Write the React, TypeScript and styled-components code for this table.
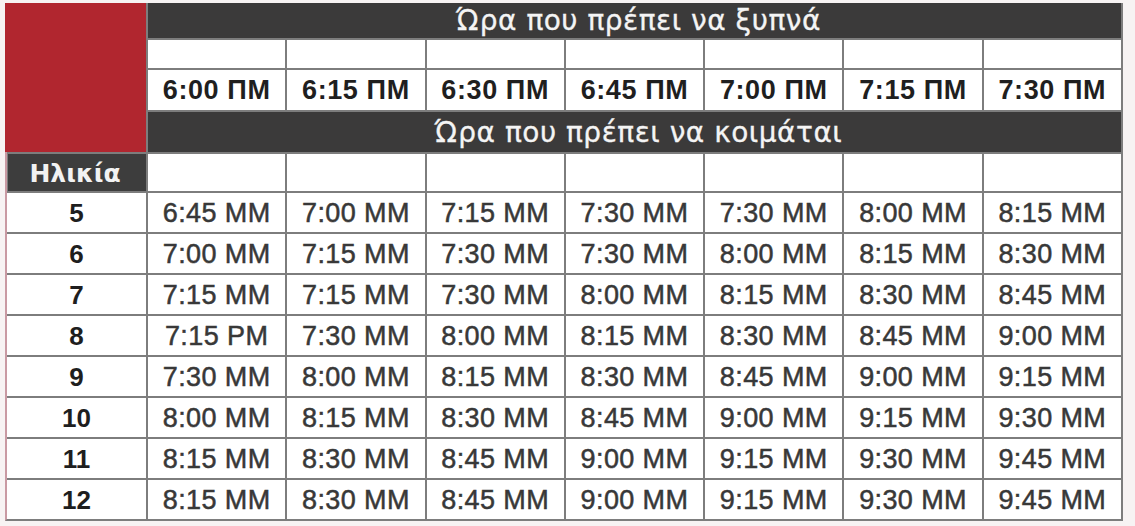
import React from "react";
import styled, { createGlobalStyle } from "styled-components";

const Global = createGlobalStyle`
  html, body { margin: 0; padding: 0; background: #f7f3f3; }
  body { font-family: "Liberation Sans", Arial, sans-serif; }
`;

const Page = styled.div`
  padding: 3px 0 0 5px;
`;

const Table = styled.div`
  width: 1118px;
  box-sizing: border-box;
  display: grid;
  grid-template-columns: 139px repeat(7, 1fr);
  grid-template-rows: 35px 28px 40px 40px 37px repeat(8, 39px);
  gap: 2px;
  background: #7d7d7d;
  border-left: 2px solid #c99aa3;
  border-right: 2px solid #7d7d7d;
  border-bottom: 2px solid #7d7d7d;
`;

const Corner = styled.div`
  grid-column: 1;
  grid-row: 1 / span 4;
  background: #b1262f;
  margin-left: -2px;
`;

const Bar = styled.div<{ $row: number }>`
  grid-column: 2 / span 7;
  grid-row: ${(p) => p.$row};
  background: #3b3a3a;
  color: #f4f4f4;
  display: flex;
  align-items: center;
  justify-content: center;
  font-family: "DejaVu Sans", "Noto Sans", sans-serif;
  font-size: 28px;
  letter-spacing: 0.5px;
  -webkit-text-stroke: 0.3px #f4f4f4;
  padding-left: 8px;
`;

const AgeHead = styled.div`
  grid-column: 1;
  grid-row: 5;
  background: #3d3d3d;
  color: #f2f2f2;
  display: flex;
  align-items: center;
  justify-content: center;
  font-family: "DejaVu Sans", "Noto Sans", sans-serif;
  font-weight: bold;
  font-size: 25px;
  margin-left: 1px;
  padding-top: 2px;
  padding-right: 4px;
`;

const Blank = styled.div`
  background: #ffffff;
`;

const TimeHead = styled.div`
  background: #ffffff;
  display: flex;
  align-items: center;
  justify-content: center;
  font-weight: bold;
  font-size: 27px;
  letter-spacing: 0.6px;
  color: #1f1f1f;
`;

const Age = styled.div`
  background: #ffffff;
  display: flex;
  align-items: center;
  justify-content: center;
  font-weight: bold;
  font-size: 26px;
  color: #1e1e1e;
  padding-top: 2px;
`;

const Cell = styled.div`
  background: #ffffff;
  display: flex;
  align-items: center;
  justify-content: center;
  font-size: 27px;
  color: #383838;
  letter-spacing: 0.4px;
  -webkit-text-stroke: 0.5px #383838;
  padding-top: 2px;
`;

const wake = ["6:00 ΠΜ", "6:15 ΠΜ", "6:30 ΠΜ", "6:45 ΠΜ", "7:00 ΠΜ", "7:15 ΠΜ", "7:30 ΠΜ"];

const rows: [string, string[]][] = [
  ["5", ["6:45 MM", "7:00 MM", "7:15 MM", "7:30 MM", "7:30 MM", "8:00 MM", "8:15 MM"]],
  ["6", ["7:00 MM", "7:15 MM", "7:30 MM", "7:30 MM", "8:00 MM", "8:15 MM", "8:30 MM"]],
  ["7", ["7:15 MM", "7:15 MM", "7:30 MM", "8:00 MM", "8:15 MM", "8:30 MM", "8:45 MM"]],
  ["8", ["7:15 PM", "7:30 MM", "8:00 MM", "8:15 MM", "8:30 MM", "8:45 MM", "9:00 MM"]],
  ["9", ["7:30 MM", "8:00 MM", "8:15 MM", "8:30 MM", "8:45 MM", "9:00 MM", "9:15 MM"]],
  ["10", ["8:00 MM", "8:15 MM", "8:30 MM", "8:45 MM", "9:00 MM", "9:15 MM", "9:30 MM"]],
  ["11", ["8:15 MM", "8:30 MM", "8:45 MM", "9:00 MM", "9:15 MM", "9:30 MM", "9:45 MM"]],
  ["12", ["8:15 MM", "8:30 MM", "8:45 MM", "9:00 MM", "9:15 MM", "9:30 MM", "9:45 MM"]],
];

export default function App() {
  return (
    <>
      <Global />
      <Page>
        <Table>
          <Corner />
          <Bar $row={1}>Ώρα που πρέπει να ξυπνά</Bar>
          {wake.map((w, i) => (
            <Blank key={"b" + i} style={{ gridRow: 2, gridColumn: i + 2 }} />
          ))}
          {wake.map((w, i) => (
            <TimeHead key={"t" + i} style={{ gridRow: 3, gridColumn: i + 2 }}>
              {w}
            </TimeHead>
          ))}
          <Bar $row={4}>Ώρα που πρέπει να κοιμάται</Bar>
          <AgeHead>Ηλικία</AgeHead>
          {wake.map((w, i) => (
            <Blank key={"c" + i} style={{ gridRow: 5, gridColumn: i + 2 }} />
          ))}
          {rows.map(([age, times]) => (
            <React.Fragment key={age}>
              <Age>{age}</Age>
              {times.map((t, j) => (
                <Cell key={j}>{t}</Cell>
              ))}
            </React.Fragment>
          ))}
        </Table>
      </Page>
    </>
  );
}
